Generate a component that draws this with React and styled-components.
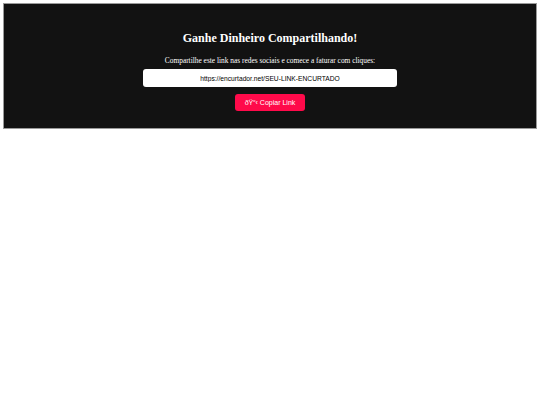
import React from "react";
import styled, { createGlobalStyle } from "styled-components";

const Global = createGlobalStyle`
  body {
    margin: 0;
    background: #fff;
    font-family: "Liberation Serif", "Times New Roman", serif;
  }
`

const Banner = styled.div`
  margin: 3px;
  border: 1px solid #9a9a9a;
  background: #121212;
  color: #fff;
  text-align: center;
  padding: 27px 20px 17px;
  display: flex;
  flex-direction: column;
  align-items: center;
`

const Title = styled.h2`
  margin: 0 0 10px;
  font-size: 12px;
  font-weight: bold;
`

const Text = styled.p`
  margin: 0 0 4px;
  font-size: 7.4px;
`

const LinkBox = styled.input`
  width: 254px;
  height: 18px;
  box-sizing: border-box;
  border: none;
  border-radius: 3px;
  background: #fff;
  color: #000;
  text-align: center;
  font-family: "Liberation Sans", Arial, sans-serif;
  font-size: 6.7px;
  padding: 0;
  margin-bottom: 7px;
`

const CopyButton = styled.button`
  width: 70px;
  height: 17px;
  border: none;
  border-radius: 3px;
  background: #ff0a4a;
  color: #fff;
  font-family: "Liberation Sans", Arial, sans-serif;
  font-size: 7px;
  padding: 0;
  cursor: pointer;
`

export default function App() {
  return (
    <>
      <Global />
      <Banner>
        <Title>Ganhe Dinheiro Compartilhando!</Title>
        <Text>Compartilhe este link nas redes sociais e comece a faturar com cliques:</Text>
        <LinkBox readOnly value="https://encurtador.net/SEU-LINK-ENCURTADO" />
        <CopyButton>ðŸ“‹ Copiar Link</CopyButton>
      </Banner>
    </>
  )
}
